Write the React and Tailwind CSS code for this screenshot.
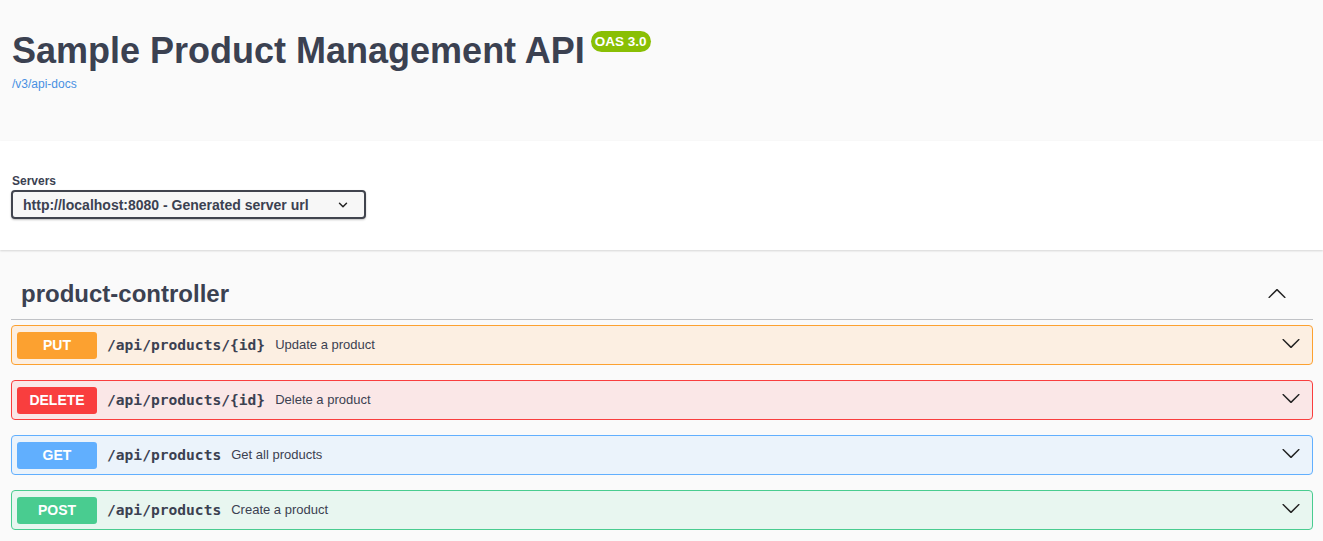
import { ChevronDown } from "lucide-react";

const ops = [
  {
    method: "PUT",
    path: "/api/products/{id}",
    summary: "Update a product",
    wrap: "border-[#fca130] bg-[#fcefe2]",
    badge: "bg-[#fca130]",
  },
  {
    method: "DELETE",
    path: "/api/products/{id}",
    summary: "Delete a product",
    wrap: "border-[#f93e3e] bg-[#fae7e7]",
    badge: "bg-[#f93e3e]",
  },
  {
    method: "GET",
    path: "/api/products",
    summary: "Get all products",
    wrap: "border-[#61affe] bg-[#ebf3fb]",
    badge: "bg-[#61affe]",
  },
  {
    method: "POST",
    path: "/api/products",
    summary: "Create a product",
    wrap: "border-[#49cc90] bg-[#e8f6f0]",
    badge: "bg-[#49cc90]",
  },
];

// swagger-ui style arrow
const Arrow = ({ up }) => (
  <svg
    width="20"
    height="20"
    viewBox="0 0 20 20"
    className={up ? "rotate-180" : ""}
    fill="#222"
  >
    <path d="M17.418 6.109c.272-.268.709-.268.979 0s.271.701 0 .969l-7.908 7.83c-.27.268-.707.268-.979 0l-7.908-7.83c-.27-.268-.27-.701 0-.969.271-.268.709-.268.979 0L10 13.25l7.418-7.141z" />
  </svg>
);

const Operation = ({ op }) => (
  <div className={`mb-[15px] flex h-10 items-center rounded border px-[5px] ${op.wrap}`}>
    <span
      className={`flex h-[27px] w-20 items-center justify-center rounded-[3px] text-sm font-bold text-white ${op.badge}`}
    >
      {op.method}
    </span>
    <span className="ml-[10px] font-['DejaVu_Sans_Mono',monospace] text-[14.6px] font-bold text-[#3b4151]">
      {op.path}
    </span>
    <span className="ml-[10px] text-[13px] text-[#3b4151]">{op.summary}</span>
    <span className="mb-[5px] ml-auto mr-[6px] flex">
      <Arrow />
    </span>
  </div>
);

export default function App() {
  return (
    <div className="min-h-screen bg-[#fafafa] font-['Liberation_Sans',Arial,sans-serif]">
      {/* info */}
      <div className="h-[141px] bg-[#fafafa] px-3 pt-[26px]">
        <div className="flex items-start">
          <h2 className="text-[36px] font-bold leading-[50px] text-[#3b4151]">
            Sample Product Management API
          </h2>
          <span className="ml-[6px] mt-[5px] rounded-full bg-[#89bf04] px-[4px] py-[2px] text-[13.5px] font-bold leading-[17px] text-white">
            OAS 3.0
          </span>
        </div>
        <a className="block text-xs text-[#4990e2]">/v3/api-docs</a>
      </div>

      {/* servers */}
      <div className="h-[109px] bg-white px-3 pt-[32px] shadow-[0_1px_2px_0_rgba(0,0,0,0.15)]">
        <div className="text-xs font-bold text-[#3b4151]">Servers</div>
        <div className="-ml-px mt-px flex h-[29px] w-[355px] items-center rounded border-2 border-[#41444e] bg-[#f7f7f7] pl-[10px] pr-[14px] text-sm font-bold text-[#3b4151] shadow-[0_1px_2px_0_rgba(0,0,0,0.25)]">
          <span>http://localhost:8080 - Generated server url</span>
          <ChevronDown className="ml-auto text-[#222]" size={14} strokeWidth={2.5} />
        </div>
      </div>

      {/* tag */}
      <div className="pl-[11px] pr-[10px] pt-[27px]">
        <div className="flex h-[43px] items-center border-b border-[#3b4151]/30 pb-[8px] pl-[10px] pr-[26px]">
          <h3 className="text-2xl font-bold text-[#3b4151]">product-controller</h3>
          <span className="ml-auto flex">
            <Arrow up />
          </span>
        </div>
        <div className="pt-[5px]">
          {ops.map((op) => (
            <Operation key={op.method} op={op} />
          ))}
        </div>
      </div>
    </div>
  );
}
